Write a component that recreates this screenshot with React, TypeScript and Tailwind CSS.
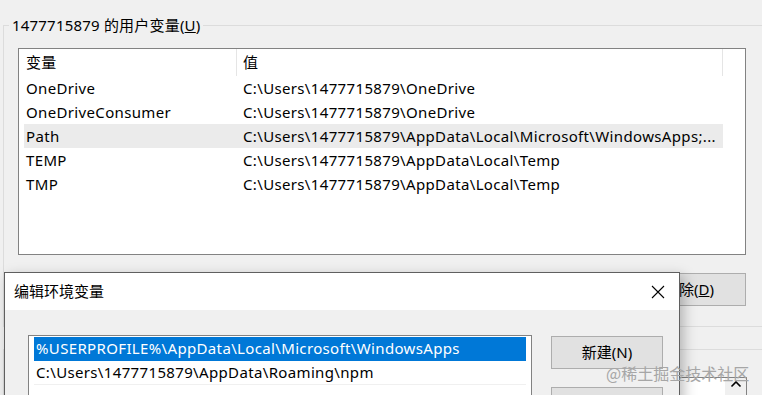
import React from 'react';

const userVars = [
  { name: 'OneDrive', value: 'C:\\Users\\1477715879\\OneDrive' },
  { name: 'OneDriveConsumer', value: 'C:\\Users\\1477715879\\OneDrive' },
  { name: 'Path', value: 'C:\\Users\\1477715879\\AppData\\Local\\Microsoft\\WindowsApps;...', hover: true },
  { name: 'TEMP', value: 'C:\\Users\\1477715879\\AppData\\Local\\Temp' },
  { name: 'TMP', value: 'C:\\Users\\1477715879\\AppData\\Local\\Temp' },
];

const pathItems = [
  '%USERPROFILE%\\AppData\\Local\\Microsoft\\WindowsApps',
  'C:\\Users\\1477715879\\AppData\\Roaming\\npm',
];

const font = "font-['Noto_Sans','Noto_Sans_CJK_SC',sans-serif]";

function WinButton({ label, className = '' }: { label: React.ReactNode; className?: string }) {
  return (
    <div
      className={`flex items-center justify-center border border-[#adadad] bg-[#e1e1e1] text-[15px] text-black ${className}`}
    >
      {label}
    </div>
  );
}

export default function App() {
  return (
    <div className={`relative w-[762px] h-[395px] overflow-hidden bg-[#f0f0f0] tracking-[0.35px] ${font}`}>
      {/* 用户变量 group */}
      <div className="relative ml-[3px] mt-[25px] h-[302px] w-[800px] border-l border-t border-b border-[#dcdcdc] pl-[14px] pt-[22px]">
        <span className="absolute left-[5px] top-[-13px] bg-[#f0f0f0] px-[3px] text-[15px] leading-[24px] tracking-[0.2px] text-black">
          1477715879 的用户变量(<span className="underline">U</span>)
        </span>

        {/* list view */}
        <div className="h-[207px] w-[728px] border border-[#828282] bg-white pl-[5px]">
          <div className="flex h-[27px] w-[699px] items-center text-[15px] text-black">
            <div className="flex h-full w-[213px] items-center border-r border-[#e5e5e5] pl-[2px]">变量</div>
            <div className="flex h-full flex-1 items-center border-r border-[#e5e5e5] pl-[6px]">值</div>
          </div>
          {userVars.map((v) => (
            <div
              key={v.name}
              className={`flex h-[24px] w-[699px] items-center text-[15px] text-black ${v.hover ? 'bg-[#ebebeb]' : ''}`}
            >
              <div className="w-[214px] pl-[2px] whitespace-nowrap">{v.name}</div>
              <div className="flex-1 pl-[5px] whitespace-nowrap">{v.value}</div>
            </div>
          ))}
        </div>

        {/* buttons */}
        <div className="mt-[18px] flex w-[728px] justify-end gap-[10px] tracking-normal">
          <WinButton label="新建(N)..." className="h-[33px] w-[114px]" />
          <WinButton label="编辑(E)..." className="h-[33px] w-[114px]" />
          <WinButton
            label={
              <span>
                删除(<span className="underline">D</span>)
              </span>
            }
            className="h-[33px] w-[114px]"
          />
        </div>
      </div>

      {/* 系统变量 group */}
      <div className="relative ml-[3px] mt-[22px] h-[100px] w-[800px] border-l border-t border-[#dcdcdc] pl-[14px] pt-[27px]">
        <div className="flex h-[60px] w-[729px] justify-end border border-[#828282] bg-white">
          <div className="flex h-full w-[21px] flex-col items-center border-l border-[#f0f0f0] bg-[#f0f0f0] pt-[2px]">
            <svg width="12" height="8" viewBox="0 0 12 8">
              <path d="M1.5 6.5 L6 2 L10.5 6.5" fill="none" stroke="#000" strokeWidth="1.6" />
            </svg>
          </div>
        </div>
      </div>

      {/* 编辑环境变量 dialog */}
      <div className="absolute left-[4px] top-[272px] h-[140px] w-[676px] border border-[#5f5f5f] bg-[#f0f0f0] shadow-[4px_4px_12px_rgba(0,0,0,0.25)]">
        <div className="flex h-[37px] items-center justify-between bg-white pl-[9px] pr-[14px]">
          <span className="text-[15px] tracking-normal text-black">编辑环境变量</span>
          <svg width="14" height="14" viewBox="0 0 14 14">
            <path d="M1 1 L13 13 M13 1 L1 13" stroke="#000" strokeWidth="1.1" />
          </svg>
        </div>
        <div className="flex pl-[23px] pt-[25px]">
          <div className="h-[80px] w-[504px] border border-[#828282] bg-white px-[5px] pt-[1px]">
            {pathItems.map((p, i) => (
              <div
                key={p}
                className={`flex h-[24px] items-center pl-[2px] text-[15px] whitespace-nowrap border-b ${
                  i === 0 ? 'bg-[#0078d7] text-white border-[#0078d7]' : 'text-black border-[#f0f0f0]'
                }`}
              >
                {p}
              </div>
            ))}
          </div>
          <div className="ml-[19px] flex flex-col gap-[18px] pt-[1px]">
            <WinButton label="新建(N)" className="h-[33px] w-[112px] tracking-normal" />
            <WinButton label="" className="h-[33px] w-[112px]" />
          </div>
        </div>
      </div>

      {/* watermark */}
      <span className="absolute left-[606px] top-[361px] text-[16px] leading-[24px] tracking-normal text-[#a6a6a6] whitespace-nowrap font-['Noto_Sans_CJK_SC',sans-serif]">
        @稀土掘金技术社区
      </span>
    </div>
  );
}
